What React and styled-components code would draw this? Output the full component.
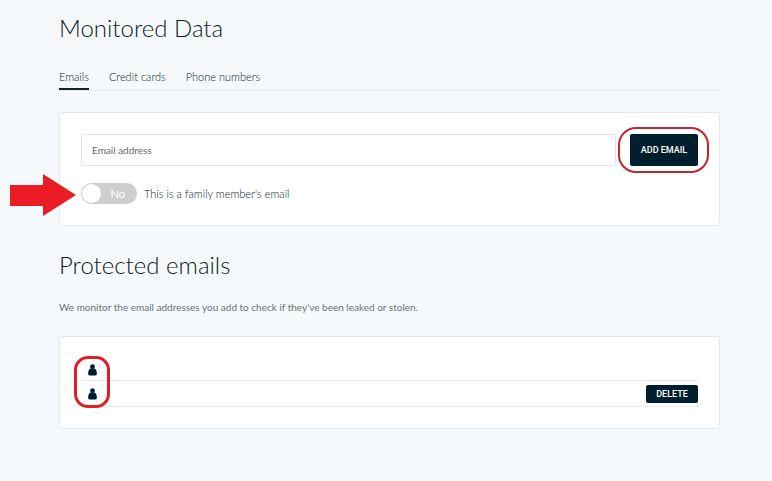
import React, { useState } from "react";
import styled, { createGlobalStyle } from "styled-components";

const GlobalStyle = createGlobalStyle`
  * {
    box-sizing: border-box;
  }
  body {
    margin: 0;
    min-height: 100vh;
    background-color: #f5f9fc;
    color: #0f1a22;
    font-family: Lato, "Noto Sans", sans-serif;
    font-size: 11px;
  }
  button {
    font-family: Roboto, sans-serif;
  }
  input {
    font-family: inherit;
  }
`;

const MonitorPageStyled = styled.main`
  padding: 12px 52px 24px 59px;
`;

const Title = styled.h1`
  margin: 0;
  font-size: 24px;
  font-weight: 300;
  line-height: 32px;
`;

const SubTitle = styled(Title).attrs({ as: "h2" })`
  margin-top: 23px;
`;

const Tabs = styled.nav`
  display: flex;
  gap: 20px;
  margin: 24px 0 21px;
  border-bottom: 1px solid #e8ebee;
`;

const Tab = styled.a`
  padding-bottom: 3px;
  border-bottom: 2px solid ${({ $active }) => ($active ? "#14232d" : "transparent")};
  color: #0f1a22;
  font-size: 11px;
  font-weight: 300;
  line-height: 17px;
  text-decoration: none;
`;

const Card = styled.section`
  padding: 21px;
  border: 1px solid #e5e9ec;
  border-radius: 4px;
  background-color: #fff;
`;

const EmailForm = styled.form`
  display: flex;
  gap: 14px;
`;

const EmailInput = styled.input`
  flex: 1;
  min-width: 0;
  height: 32px;
  padding: 0 10px;
  border: 1px solid #e3e5e7;
  border-radius: 2px;
  font-size: 10px;
  &::placeholder {
    color: #65696d;
    opacity: 1;
  }
`;

const Button = styled.button`
  width: ${({ $small }) => ($small ? "52px" : "68px")};
  height: ${({ $small }) => ($small ? "18px" : "32px")};
  padding: 0;
  border: 0;
  border-radius: 2px;
  background-color: #001e2c;
  color: #fff;
  font-size: 9px;
  font-weight: 500;
  white-space: nowrap;
  cursor: pointer;
`;

const Marked = styled.div`
  position: relative;
`;

const ButtonRing = styled.span`
  position: absolute;
  inset: -7px -11px -7px -12px;
  border: 2px solid #c1272f;
  border-radius: 18px;
  pointer-events: none;
`;

const FamilyRow = styled.div`
  position: relative;
  display: flex;
  align-items: center;
  margin: 17px 0 0;
`;

const Arrow = styled.svg`
  position: absolute;
  left: -72px;
  top: -10px;
`;

const FamilyLabel = styled.label`
  display: flex;
  align-items: center;
  gap: 7px;
  color: #0f1a22;
  font-size: 11px;
  font-weight: 300;
  cursor: pointer;
`;

const Toggle = styled.span`
  position: relative;
  display: flex;
  align-items: center;
  justify-content: ${({ $on }) => ($on ? "flex-start" : "flex-end")};
  width: 56px;
  height: 21px;
  padding: 0 12px;
  border-radius: 11px;
  background-color: ${({ $on }) => ($on ? "#001e2c" : "#cecece")};
  color: #fff;
  font-size: 11px;
  font-weight: 400;
  input {
    position: absolute;
    inset: 0;
    width: 100%;
    height: 100%;
    margin: 0;
    opacity: 0;
  }
  &::after {
    content: "";
    position: absolute;
    top: 1px;
    left: ${({ $on }) => ($on ? "36px" : "1px")};
    width: 19px;
    height: 19px;
    border-radius: 50%;
    background-color: #fff;
    pointer-events: none;
  }
`;

const Description = styled.p`
  margin: 18px 0 20px;
  color: #6b7277;
  font-size: 10px;
  line-height: 17px;
`;

const EmailList = styled.ul`
  position: relative;
  margin: 0;
  padding: 0;
  list-style: none;
`;

const EmailItem = styled.li`
  display: flex;
  align-items: center;
  justify-content: space-between;
  height: ${({ $compact }) => ($compact ? "23px" : "26px")};
  padding: ${({ $compact }) => ($compact ? "2px 0 0 7px" : "0 0 0 7px")};
  border-bottom: 1px solid #e8ebee;
`;

const ListRing = styled.span`
  position: absolute;
  top: -2px;
  left: -7px;
  width: 36px;
  height: 52px;
  border: 3px solid #dd1f29;
  border-radius: 14px;
  pointer-events: none;
`;

const PersonIcon = () => (
  <svg width="9" height="12" viewBox="0 0 9 12" fill="#001e2c" aria-hidden="true">
    <circle cx="4.5" cy="2.7" r="2.4" />
    <path d="M2.4 4.6H6.6Q8.8 5.8 8.8 8.6V10Q8.8 11.6 7.2 11.6H1.8Q.2 11.6.2 10V8.6Q.2 5.8 2.4 4.6Z" />
  </svg>
);

const tabs = ["Emails", "Credit cards", "Phone numbers"];

function App() {
  const [activeTab, setActiveTab] = useState(tabs[0]);
  const [family, setFamily] = useState(false);

  return (
    <MonitorPageStyled>
      <GlobalStyle />
      <Title>Monitored Data</Title>
      <Tabs>
        {tabs.map((tab) => (
          <Tab
            key={tab}
            href="#"
            $active={tab === activeTab}
            onClick={() => setActiveTab(tab)}
          >
            {tab}
          </Tab>
        ))}
      </Tabs>
      <Card>
        <EmailForm onSubmit={(e) => e.preventDefault()}>
          <EmailInput type="email" placeholder="Email address" aria-label="Email address" />
          <Marked>
            <Button type="submit">ADD EMAIL</Button>
            <ButtonRing />
          </Marked>
        </EmailForm>
        <FamilyRow>
          <Arrow width="68" height="44" viewBox="0 0 68 44" aria-hidden="true">
            <path d="M1 12H34V1L67 22L34 43V33H1Z" fill="#ec1c24" />
          </Arrow>
          <FamilyLabel>
            <Toggle $on={family}>
              <input
                type="checkbox"
                checked={family}
                onChange={(e) => setFamily(e.target.checked)}
              />
              {family ? "Yes" : "No"}
            </Toggle>
            This is a family member's email
          </FamilyLabel>
        </FamilyRow>
      </Card>
      <SubTitle>Protected emails</SubTitle>
      <Description>
        We monitor the email addresses you add to check if they've been leaked or stolen.
      </Description>
      <Card>
        <EmailList>
          <EmailItem $compact>
            <PersonIcon />
          </EmailItem>
          <EmailItem>
            <PersonIcon />
            <Button type="button" $small>
              DELETE
            </Button>
          </EmailItem>
          <ListRing />
        </EmailList>
      </Card>
    </MonitorPageStyled>
  );
}

export default App;
